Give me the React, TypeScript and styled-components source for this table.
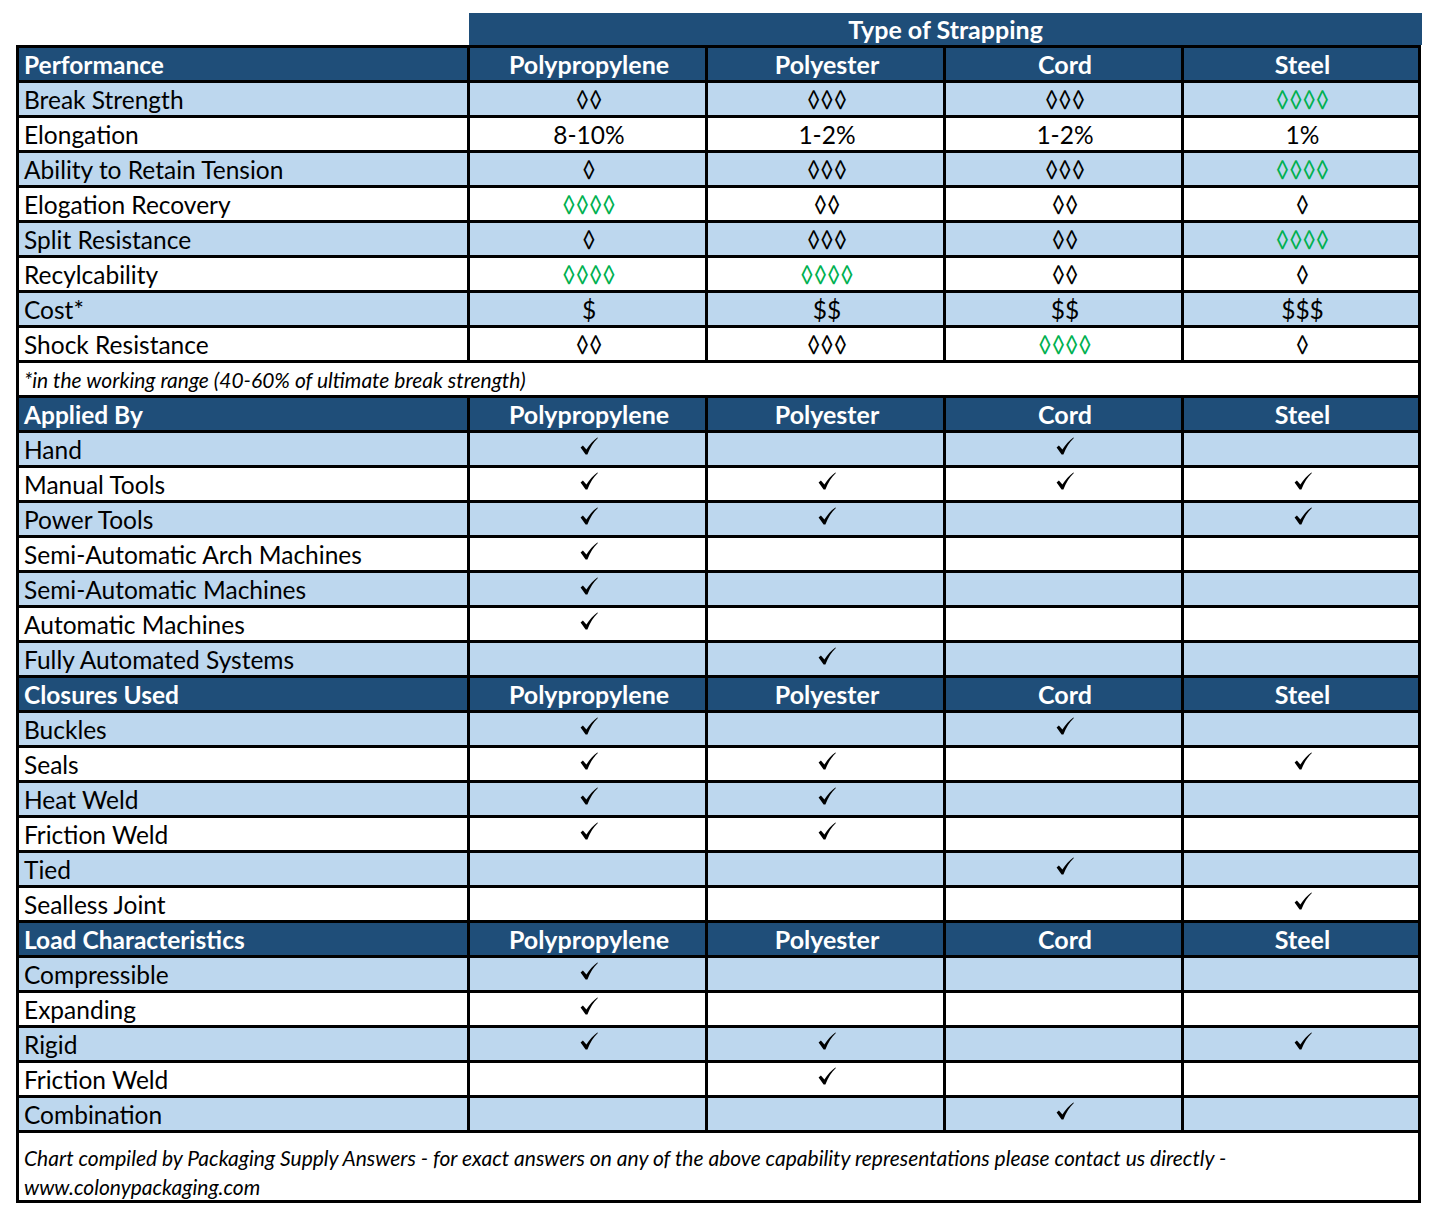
import React from "react";
import styled, { createGlobalStyle } from "styled-components";

const GlobalStyle = createGlobalStyle`
  html, body { margin: 0; padding: 0; background: #ffffff; }
  body { font-family: Lato, "Open Sans", sans-serif; color: #000; }
`;

const DARK = "#1F4E79";
const LIGHT = "#BDD7EE";
const GREEN = "#00B050";

const Page = styled.div`
  padding: 13px 0 0 16px;
  width: 1406px;
`;

const TitleBar = styled.div`
  margin-left: 453px;
  width: 953px;
  height: 32px;
  background: ${DARK};
  color: #fff;
  font-weight: 700;
  font-size: 25px;
  display: flex;
  align-items: center;
  justify-content: center;
`;

const Grid = styled.div`
  display: grid;
  grid-template-columns: 448px 235px 235px 235px 234px;
  grid-auto-rows: 32px;
  gap: 3px;
  padding: 3px;
  background: #000;
  width: max-content;
`;

const Cell = styled.div<{ $tone: "dark" | "light" | "white" }>`
  background: ${(p) => (p.$tone === "dark" ? DARK : p.$tone === "light" ? LIGHT : "#fff")};
  color: ${(p) => (p.$tone === "dark" ? "#fff" : "#000")};
  font-size: 24.5px;
  display: flex;
  align-items: center;
  white-space: nowrap;
  overflow: hidden;
`;

const HeadLabel = styled(Cell)`
  font-weight: 700;
  padding-left: 5px;
`;

const HeadValue = styled(Cell)`
  font-weight: 700;
  font-size: 25px;
  justify-content: center;
  padding-left: 3px;
`;

const Label = styled(Cell)`
  padding-left: 5px;
`;

const Value = styled(Cell)`
  justify-content: center;
  padding-left: 3px;
`;

const Diamonds = styled.span<{ $green?: boolean }>`
  color: ${(p) => (p.$green ? GREEN : "#000")};
  font-size: 23px;
`;

const Note = styled.div`
  grid-column: 1 / -1;
  background: #fff;
  font-style: italic;
  font-size: 21px;
  display: flex;
  align-items: center;
  padding-left: 5px;
`;

const Footer = styled.div`
  grid-column: 1 / -1;
  grid-row: span 2;
  background: #fff;
  font-style: italic;
  font-size: 21px;
  line-height: 29px;
  padding: 10px 5px 0;
`;

const CheckSvg = styled.svg`
  width: 18px;
  height: 18px;
  margin-top: -7px;
`;

const Check = () => (
  <CheckSvg viewBox="0 0 18 18">
    <path d="M0.6 10.4 L2.9 8.6 L6.4 12.6 C9.6 7.4 13.2 3.4 17.4 0.4 L17.9 1.1 C13.6 5.2 10.2 10.4 7.4 17.4 L5.6 17.4 Z" fill="#000" />
  </CheckSvg>
);

type V = string | boolean;

type Section = {
  title: string;
  rows: [string, V[]][];
};

const cols = ["Polypropylene", "Polyester", "Cord", "Steel"];

const renderValue = (v: V) => {
  if (v === true) return <Check />;
  if (v === false) return null;
  if (v.startsWith("g")) return <Diamonds $green>{v.slice(1)}</Diamonds>;
  if (v.startsWith("◊")) return <Diamonds>{v}</Diamonds>;
  return v;
};

const T = true;
const F = false;
const D1 = "◊";
const D2 = "◊◊";
const D3 = "◊◊◊";
const G4 = "g◊◊◊◊";

const perf: Section = {
  title: "Performance",
  rows: [
    ["Break Strength", [D2, D3, D3, G4]],
    ["Elongation", ["8-10%", "1-2%", "1-2%", "1%"]],
    ["Ability to Retain Tension", [D1, D3, D3, G4]],
    ["Elogation Recovery", [G4, D2, D2, D1]],
    ["Split Resistance", [D1, D3, D2, G4]],
    ["Recylcability", [G4, G4, D2, D1]],
    ["Cost*", ["$", "$$", "$$", "$$$"]],
    ["Shock Resistance", [D2, D3, G4, D1]],
  ],
};

const applied: Section = {
  title: "Applied By",
  rows: [
    ["Hand", [T, F, T, F]],
    ["Manual Tools", [T, T, T, T]],
    ["Power Tools", [T, T, F, T]],
    ["Semi-Automatic Arch Machines", [T, F, F, F]],
    ["Semi-Automatic Machines", [T, F, F, F]],
    ["Automatic Machines", [T, F, F, F]],
    ["Fully Automated Systems", [F, T, F, F]],
  ],
};

const closures: Section = {
  title: "Closures Used",
  rows: [
    ["Buckles", [T, F, T, F]],
    ["Seals", [T, T, F, T]],
    ["Heat Weld", [T, T, F, F]],
    ["Friction Weld", [T, T, F, F]],
    ["Tied", [F, F, T, F]],
    ["Sealless Joint", [F, F, F, T]],
  ],
};

const load: Section = {
  title: "Load Characteristics",
  rows: [
    ["Compressible", [T, F, F, F]],
    ["Expanding", [T, F, F, F]],
    ["Rigid", [T, T, F, T]],
    ["Friction Weld", [F, T, F, F]],
    ["Combination", [F, F, T, F]],
  ],
};

const SectionRows = ({ s }: { s: Section }) => (
  <>
    <HeadLabel $tone="dark">{s.title}</HeadLabel>
    {cols.map((c) => (
      <HeadValue key={c} $tone="dark">
        {c}
      </HeadValue>
    ))}
    {s.rows.map(([label, vals], i) => {
      const tone = i % 2 === 0 ? "light" : "white";
      return (
        <React.Fragment key={label + i}>
          <Label $tone={tone}>{label}</Label>
          {vals.map((v, j) => (
            <Value key={j} $tone={tone}>
              {renderValue(v)}
            </Value>
          ))}
        </React.Fragment>
      );
    })}
  </>
);

export default function App() {
  return (
    <Page>
      <GlobalStyle />
      <TitleBar>Type of Strapping</TitleBar>
      <Grid>
        <SectionRows s={perf} />
        <Note>*in the working range (40-60% of ultimate break strength)</Note>
        <SectionRows s={applied} />
        <SectionRows s={closures} />
        <SectionRows s={load} />
        <Footer>
          Chart compiled by Packaging Supply Answers - for exact answers on any of the above capability
          representations please contact us directly -
          <br />
          www.colonypackaging.com
        </Footer>
      </Grid>
    </Page>
  );
}
